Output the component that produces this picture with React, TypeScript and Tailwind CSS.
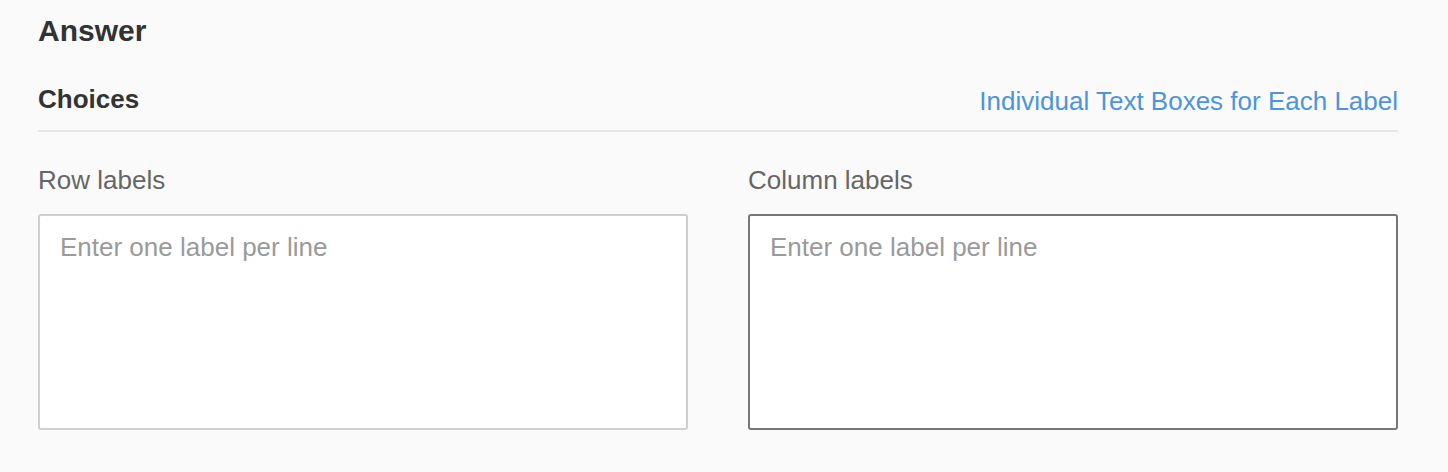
const LabelBox = ({ label, focused }: { label: string; focused?: boolean }) => {
  return (
    <div className="flex flex-col">
      <label className="text-[26px] leading-[32px] text-[#666666]">{label}</label>
      <textarea
        className={
          focused
            ? "mt-[18px] h-[216px] w-full resize-none rounded-[3px] border-2 border-[#777777] bg-white px-[20px] py-[15px] text-[26px] leading-[32px] text-[#333333] outline-none placeholder:text-[#9a9a9a]"
            : "mt-[18px] h-[216px] w-full resize-none rounded-[3px] border-2 border-[#cfcfcf] bg-white px-[20px] py-[15px] text-[26px] leading-[32px] text-[#333333] outline-none placeholder:text-[#9a9a9a]"
        }
        placeholder="Enter one label per line"
      />
    </div>
  )
}

export default function App() {
  return (
    <div
      className="min-h-[472px] w-full bg-[#fafafa] px-[38px] pt-[13px]"
      style={{ fontFamily: '"Liberation Sans", Arial, sans-serif' }}
    >
      <div className="w-[1360px]">
        <h1 className="text-[30px] font-bold leading-[36px] text-[#333333]">Answer</h1>

        <div className="mt-[34px] flex items-start justify-between border-b-2 border-[#e6e6e6] pb-[15px]">
          <h2 className="text-[26px] font-bold leading-[32px] text-[#333333]">Choices</h2>
          <a href="#" className="-mb-[2px] mt-[2px] text-[26px] leading-[32px] text-[#4a95dc]">
            Individual Text Boxes for Each Label
          </a>
        </div>

        <div className="mt-[32px] grid grid-cols-2 gap-[60px]">
          <LabelBox label="Row labels" />
          <LabelBox label="Column labels" focused />
        </div>
      </div>
    </div>
  )
}
